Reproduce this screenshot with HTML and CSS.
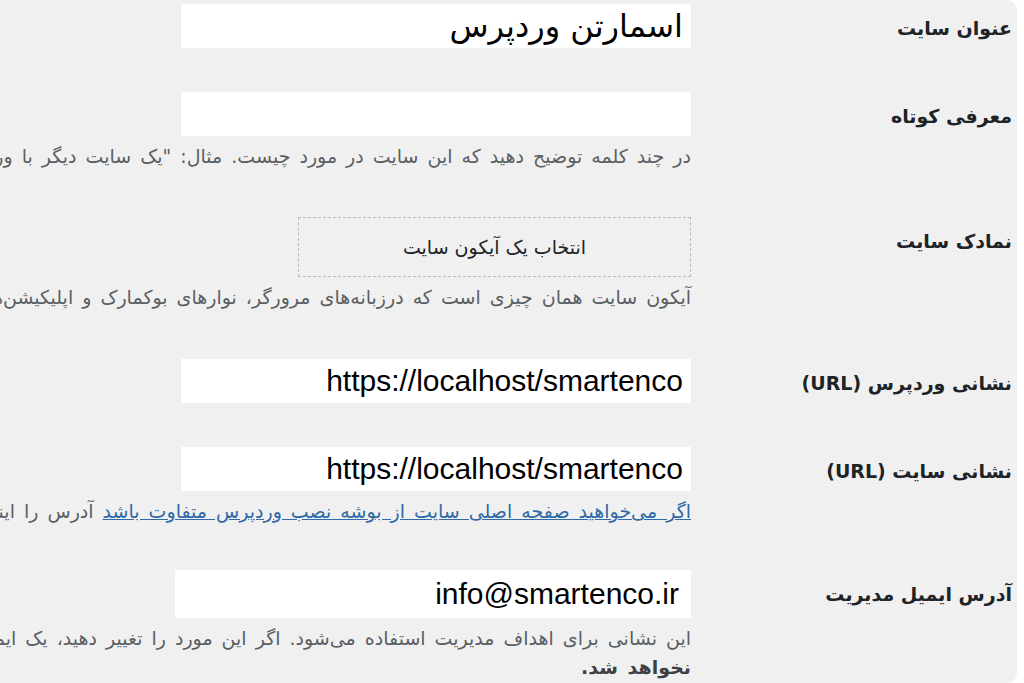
FILE: index.html
```html
<!DOCTYPE html>
<html lang="fa">
<head>
  <meta charset="UTF-8" />
  <meta name="viewport" content="width=device-width, initial-scale=1.0" />
  <title>تنظیمات عمومی</title>
  <link rel="stylesheet" href="styles.css">
</head>
<body>
  <div class="panel">
    <div class="form-table">

      <div class="row">
        <label class="row-label" for="blogname">عنوان سایت</label>
        <div class="row-field">
          <input id="blogname" class="text-input title-input" type="text" value="اسمارتن وردپرس" />
        </div>
      </div>

      <div class="row">
        <label class="row-label" for="blogdescription">معرفی کوتاه</label>
        <div class="row-field">
          <input id="blogdescription" class="text-input" type="text" value="" />
          <p class="description">در چند کلمه توضیح دهید که این سایت در مورد چیست. مثال: "یک سایت دیگر با وردپرس"</p>
        </div>
      </div>

      <div class="row icon-row">
        <div class="row-label">نمادک سایت</div>
        <div class="row-field">
          <button class="icon-picker" type="button">انتخاب یک آیکون سایت</button>
          <p class="description">آیکون سایت همان چیزی است که درزبانه‌های مرورگر، نوارهای بوکمارک و اپلیکیشن‌های وردپرس می‌بینید. آن را اینجا بارگذاری کنید!</p>
        </div>
      </div>

      <div class="row">
        <label class="row-label" for="siteurl">نشانی وردپرس (URL)</label>
        <div class="row-field">
          <input id="siteurl" class="text-input url-input" type="text" value="https://localhost/smartenco" />
        </div>
      </div>

      <div class="row">
        <label class="row-label" for="home">نشانی سایت (URL)</label>
        <div class="row-field">
          <input id="home" class="text-input url-input" type="text" value="https://localhost/smartenco" />
          <p class="description"><a href="#">اگر می‌خواهید صفحه اصلی سایت از بوشه نصب وردپرس متفاوت باشد</a> آدرس را اینجا وارد کنید.</p>
        </div>
      </div>

      <div class="row">
        <label class="row-label" for="admin_email">آدرس ایمیل مدیریت</label>
        <div class="row-field">
          <input id="admin_email" class="text-input url-input email-input" type="text" value="info@smartenco.ir" />
          <p class="description">این نشانی برای اهداف مدیریت استفاده می‌شود. اگر این مورد را تغییر دهید، یک ایمیل به نشانی جدید برای تایید ارسال خواهیم کرد. <strong>نشانی جدید تا زمانی که تایید نشود فعال<br>نخواهد شد.</strong></p>
        </div>
      </div>

    </div>
  </div>
</body>
</html>
```

FILE: styles.css
```css
body {
  margin: 0;
  padding: 0;
  background-color: #ffffff;
  font-family: "Liberation Sans", "DejaVu Sans", sans-serif;
  overflow: hidden;
}
.panel {
  width: 1017px;
  height: 683px;
  background-color: #f0f0f0;
  border-radius: 0 10px 10px 0;
  overflow: hidden;
  direction: rtl;
}
.form-table {
  display: flex;
  flex-direction: column;
  gap: 44px;
  padding: 4px 5px 0 0;
}
.row {
  display: grid;
  grid-template-columns: 321px minmax(0, 1fr);
}
.icon-row {
  padding: 2px 0 3px;
}
.row-label {
  margin-top: 4px;
  font-family: "DejaVu Sans", sans-serif;
  font-weight: bold;
  font-size: 19px;
  line-height: 40px;
  color: #1d2327;
  white-space: nowrap;
}
.row-field {
  display: flex;
  flex-direction: column;
  align-items: flex-start;
}
.text-input {
  box-sizing: border-box;
  width: 510px;
  height: 44px;
  margin: 0;
  padding: 0 8px;
  border: none;
  background-color: #ffffff;
  color: #000;
  text-align: right;
  outline: none;
}
.title-input {
  font-family: "DejaVu Sans", sans-serif;
  font-size: 32px;
  direction: rtl;
}
.url-input {
  font-family: "Liberation Sans", sans-serif;
  font-size: 30px;
  direction: ltr;
}
.email-input {
  width: 516px;
  height: 48px;
  margin-left: -4px;
  padding-right: 12px;
}
.icon-picker {
  box-sizing: border-box;
  width: 393px;
  height: 60px;
  border: 1px dashed #b9b9bb;
  background: transparent;
  font-family: "DejaVu Sans", sans-serif;
  font-size: 19px;
  color: #1d2327;
  cursor: pointer;
}
.description {
  margin: 6px 0 0;
  font-family: "DejaVu Sans", sans-serif;
  font-size: 19px;
  word-spacing: 3px;
  line-height: 29px;
  color: #5a5f64;
  white-space: nowrap;
}
.description a {
  color: #2f6aa8;
}
.description strong {
  color: #3c4045;
}
```
